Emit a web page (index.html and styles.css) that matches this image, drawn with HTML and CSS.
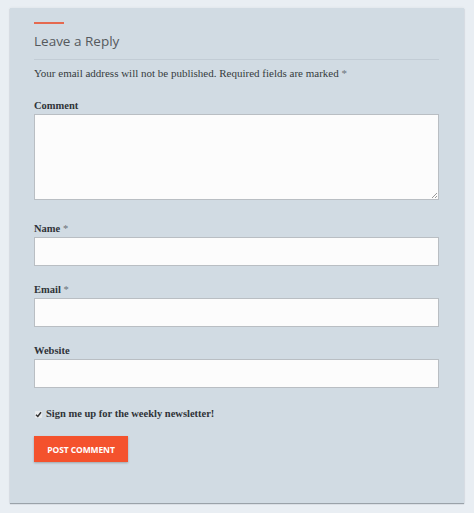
FILE: index.html
```html
<!DOCTYPE html>
<html>
<head>
<meta charset="utf-8">
<link rel="stylesheet" href="styles.css">
</head>
<body>
<div class="card">
  <div class="accent"></div>
  <h3 class="title">Leave a Reply</h3>
  <p class="notes">Your email address will not be published. Required fields are marked <span class="req">*</span></p>
  <div class="field first">
    <label class="label">Comment</label>
    <div class="textarea"><span class="grip"></span></div>
  </div>
  <div class="field after-area">
    <label class="label">Name <span class="req">*</span></label>
    <div class="input"></div>
  </div>
  <div class="field">
    <label class="label">Email <span class="req">*</span></label>
    <div class="input"></div>
  </div>
  <div class="field">
    <label class="label">Website</label>
    <div class="input"></div>
  </div>
  <div class="check">
    <span class="box"><svg width="7" height="7" viewBox="0 0 7 7"><path d="M1 3.8 L2.8 5.5 L6 1.2" fill="none" stroke="#333" stroke-width="1.5"/></svg></span>
    <span class="check-label">Sign me up for the weekly newsletter!</span>
  </div>
  <button class="submit">POST COMMENT</button>
</div>
</body>
</html>
```
FILE: styles.css
```css
html, body { margin: 0; padding: 0; }
body {
  background: #e9eef3;
  width: 474px;
  height: 513px;
  overflow: hidden;
}
.card {
  margin: 8px 10px 0 10px;
  height: 495px;
  box-sizing: border-box;
  background: #d1dbe3;
  box-shadow: 0 1px 1px #9aa2a9, 0 0 3px rgba(0,0,0,0.06);
  padding: 14px 25px 0 24px;
}
.accent {
  width: 30px;
  height: 2px;
  background: #e5694f;
}
.title {
  margin: 7px 0 0 0;
  font-family: "Open Sans", sans-serif;
  font-weight: 400;
  font-size: 13.5px;
  line-height: 20px;
  color: #55595d;
  padding-bottom: 8px;
  border-bottom: 1px solid #c2ccd5;
}
.notes {
  margin: 6px 0 0 0;
  font-family: "Liberation Serif", serif;
  font-size: 11px;
  line-height: 14px;
  color: #363b40;
}
.req { color: #6b7178; }
.field { margin-top: 17px; }
.field.first { margin-top: 19px; }
.field.after-area { margin-top: 22px; }
.label {
  display: block;
  font-family: "Liberation Serif", serif;
  font-weight: bold;
  font-size: 10.5px;
  line-height: 14px;
  color: #2f3338;
  margin-bottom: 1px;
}
.label .req { font-weight: normal; }
.textarea, .input {
  background: #fcfcfc;
  border: 1px solid #b9bec3;
  box-sizing: border-box;
  position: relative;
}
.textarea { height: 86px; }
.input { height: 29px; }
.grip {
  position: absolute;
  right: 1px;
  bottom: 1px;
  width: 5px;
  height: 5px;
  background: linear-gradient(135deg, transparent 45%, #999 45%, #999 55%, transparent 55%, transparent 75%, #999 75%, #999 85%, transparent 85%);
}
.check {
  display: flex;
  align-items: center;
  margin-top: 19px;
  margin-left: 1px;
}
.box {
  display: flex;
  align-items: center;
  justify-content: center;
  width: 7px;
  height: 7px;
  background: #e8ebee;
  border-radius: 1px;
  margin-right: 4px;
}
.check-label {
  font-family: "Liberation Serif", serif;
  font-weight: bold;
  font-size: 10.5px;
  line-height: 14px;
  color: #2f3338;
}
.submit {
  display: block;
  margin-top: 15px;
  width: 94px;
  height: 26px;
  border: none;
  background: #f4522d;
  color: #fff;
  font-family: "Open Sans", sans-serif;
  font-weight: 700;
  font-size: 8.5px;
  letter-spacing: -0.1px;
  padding: 0;
  box-shadow: 0 1px 2px rgba(0,0,0,0.25);
}
```
